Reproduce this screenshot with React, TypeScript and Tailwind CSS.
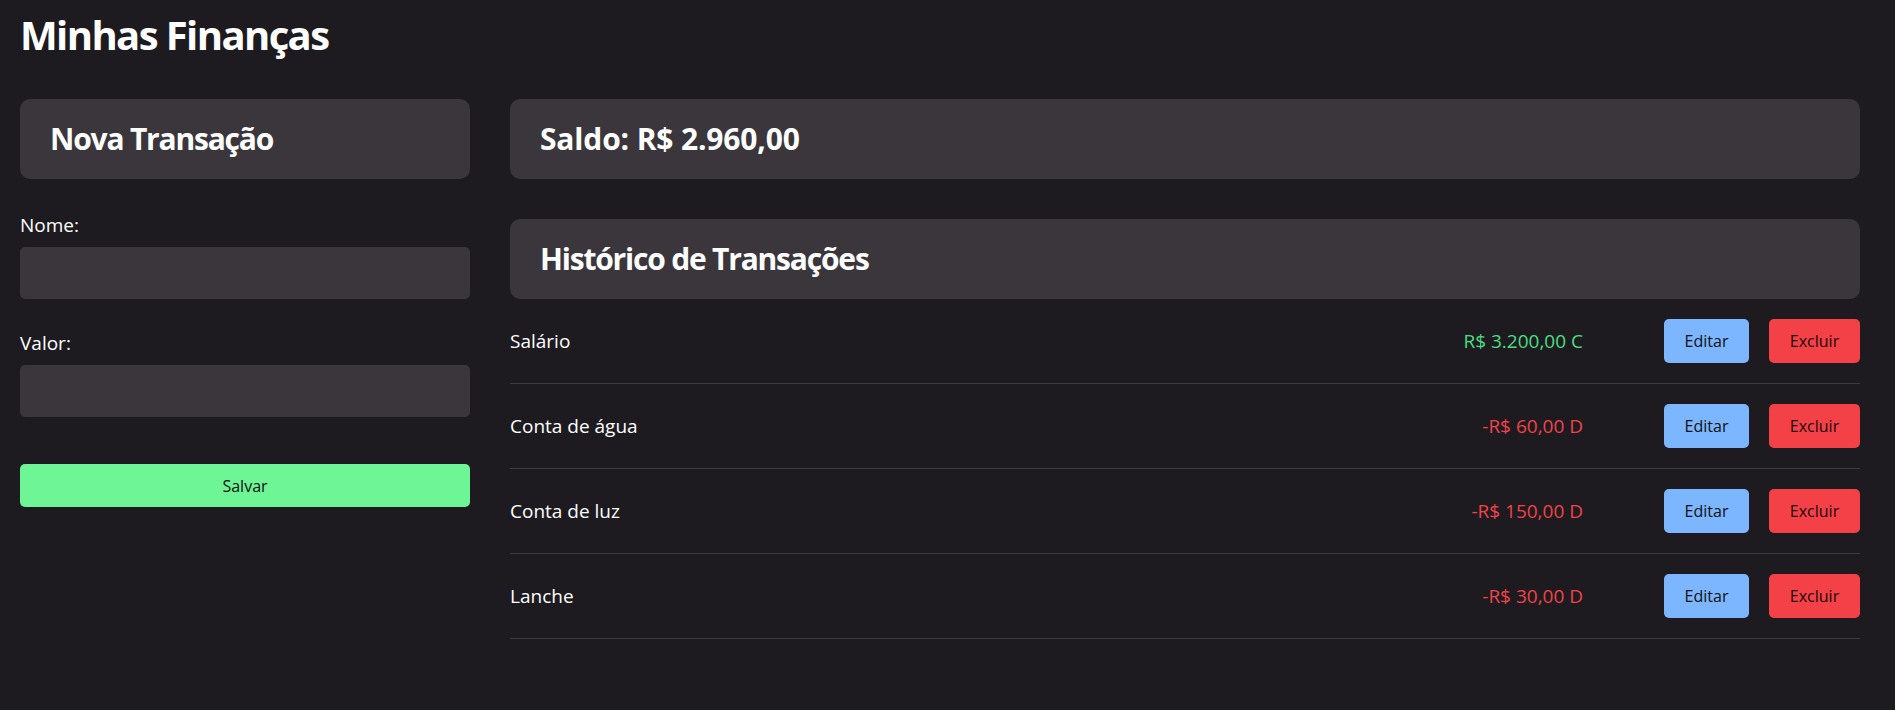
const transacoes = [
  { nome: "Salário", valor: "R$ 3.200,00 C", tipo: "C" },
  { nome: "Conta de água", valor: "-R$ 60,00 D", tipo: "D" },
  { nome: "Conta de luz", valor: "-R$ 150,00 D", tipo: "D" },
  { nome: "Lanche", valor: "-R$ 30,00 D", tipo: "D" },
];

function CardTitle({ children, tight = true }: { children: React.ReactNode; tight?: boolean }) {
  return (
    <div className="flex h-20 items-center rounded-[10px] bg-[#3a363c] px-[30px]">
      <h2
        className={
          tight
            ? "text-[30px] font-bold leading-none tracking-[-0.04em] text-white"
            : "text-[30px] font-bold leading-none tracking-[-0.005em] text-white"
        }
      >
        {children}
      </h2>
    </div>
  );
}

export default function App() {
  return (
    <div
      className="min-h-[710px] bg-[#1d1b1f] px-5 pt-[8px] text-white"
      style={{ fontFamily: '"Open Sans", "Noto Sans", sans-serif' }}
    >
      <h1 className="text-[40px] font-bold leading-[54px] tracking-[-0.04em]">Minhas Finanças</h1>

      <div className="mt-[37px] flex gap-10">
        <div className="flex w-[450px] flex-col">
          <CardTitle>Nova Transação</CardTitle>

          <label className="mt-[33px] text-[19px] leading-[27px]">Nome:</label>
          <input className="mt-[8px] h-[52px] rounded-[5px] bg-[#3a363c] px-3 text-[19px] outline-none" />

          <label className="mt-[31px] text-[19px] leading-[27px]">Valor:</label>
          <input className="mt-[8px] h-[52px] rounded-[5px] bg-[#3a363c] px-3 text-[19px] outline-none" />

          <button className="mt-[47px] h-[43px] rounded-[5px] bg-[#6df596] text-[16px] text-[#111]">
            Salvar
          </button>
        </div>

        <div className="flex w-[1350px] flex-col">
          <CardTitle tight={false}>Saldo: R$ 2.960,00</CardTitle>
          <div className="mt-10">
            <CardTitle>Histórico de Transações</CardTitle>
          </div>

          <ul>
            {transacoes.map((t) => (
              <li
                key={t.nome}
                className="flex h-[85px] items-center border-b border-[#3d3b40] text-[19px]"
              >
                <span className="flex-1">{t.nome}</span>
                <span className={t.tipo === "C" ? "text-[#4ade80]" : "text-[#f0434a]"}>
                  {t.valor}
                </span>
                <div className="ml-[81px] flex gap-5">
                  <button className="h-[44px] w-[85px] rounded-[5px] bg-[#7cb6fe] text-[16px] text-[#111]">
                    Editar
                  </button>
                  <button className="h-[44px] w-[91px] rounded-[5px] bg-[#f44148] text-[16px] text-[#1a0a0a]">
                    Excluir
                  </button>
                </div>
              </li>
            ))}
          </ul>
        </div>
      </div>
    </div>
  );
}
